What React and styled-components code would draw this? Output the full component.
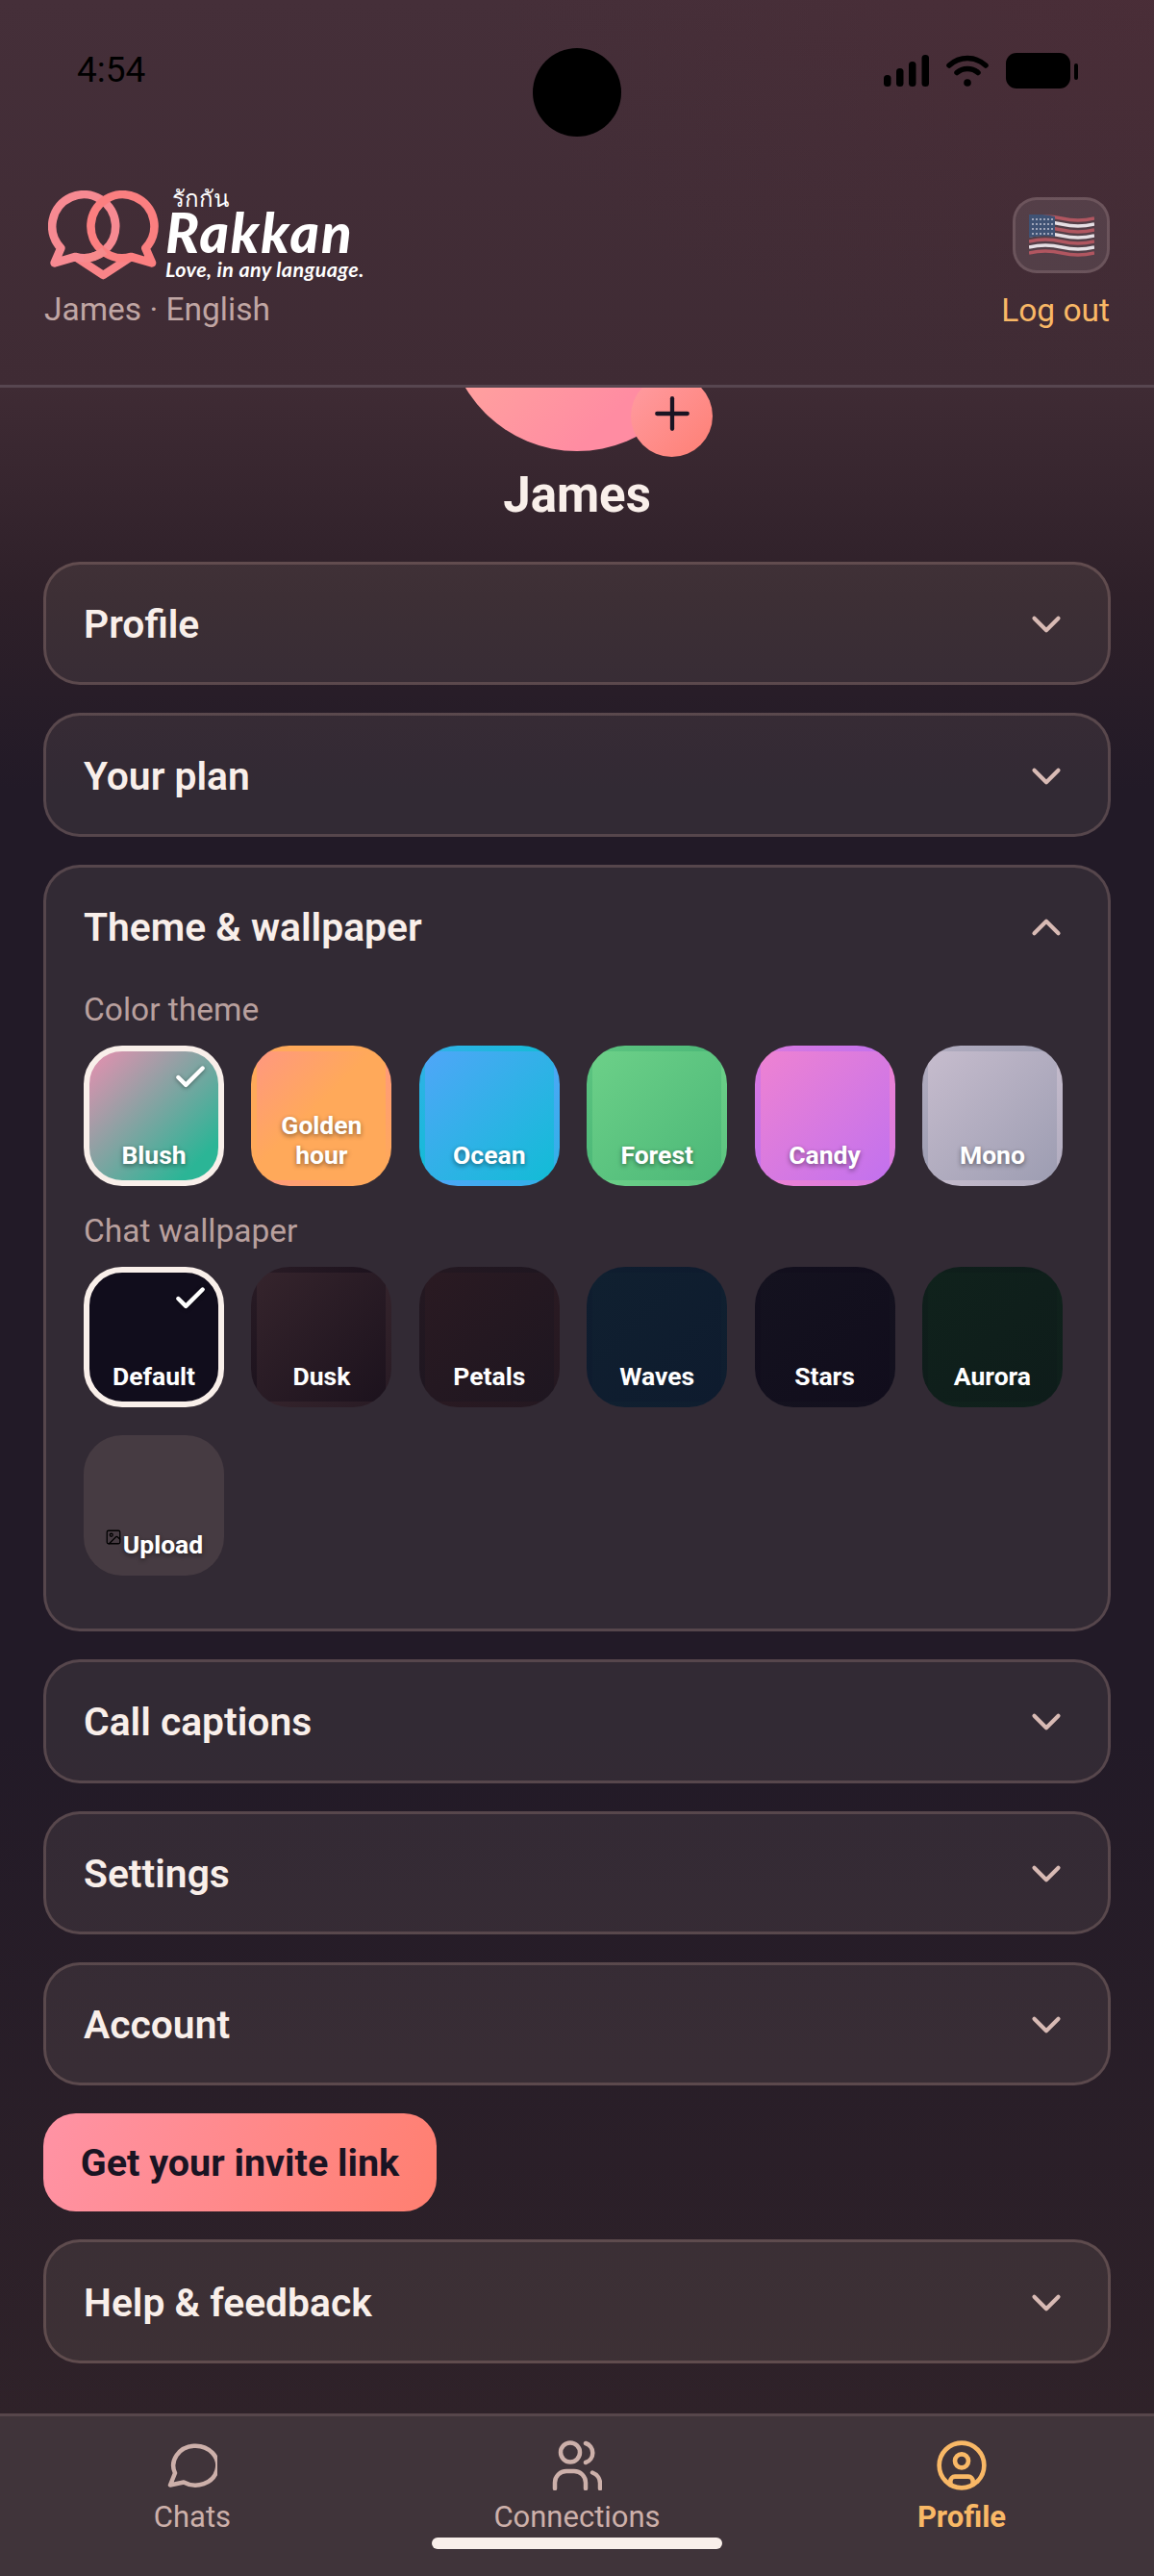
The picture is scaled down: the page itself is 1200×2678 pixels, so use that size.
import React from "react";
import styled, { createGlobalStyle } from "styled-components";
import { Check, ChevronDown, ChevronUp, CircleUser, Image, Plus } from "lucide-react";

const GlobalStyle = createGlobalStyle`
  html, body {
    margin: 0;
    padding: 0;
    background: #221a27;
  }
  * {
    box-sizing: border-box;
  }
`;

const Page = styled.div`
  position: relative;
  width: 1200px;
  height: 2678px;
  display: flex;
  flex-direction: column;
  overflow: hidden;
  font-family: Roboto, "Noto Sans", sans-serif;
  color: #f9efea;
  background:
    radial-gradient(700px 400px at 100% 0, rgba(90, 40, 50, 0.22), transparent 100%),
    linear-gradient(180deg, #452f39 0, #3f2b34 400px, #2e2029 620px, #221a27 820px, #221a27 1800px, #2f2229 2510px);
`;

const Header = styled.header`
  height: 403px;
  flex-shrink: 0;
  border-bottom: 3px solid #574650;
  padding: 0 46px 0 46px;
  display: flex;
  flex-direction: column;
`;

const StatusBar = styled.div`
  height: 195px;
  padding: 55px 33px 0 34px;
  display: flex;
  justify-content: space-between;
  align-items: flex-start;
`;

const Clock = styled.span`
  font-size: 37px;
  line-height: 36px;
  color: #000;
`;

const StatusIcons = styled.div`
  display: flex;
  align-items: center;
  gap: 18px;
`;

const Camera = styled.div`
  position: absolute;
  left: 554px;
  top: 50px;
  width: 92px;
  height: 92px;
  border-radius: 50%;
  background: #000;
`;

const BrandRow = styled.div`
  display: flex;
  justify-content: space-between;
  align-items: flex-start;
`;

const BrandColumn = styled.div`
  display: flex;
  flex-direction: column;
`;

const Logo = styled.div`
  display: flex;
  align-items: flex-start;
  margin: 3px 0 0 4px;
  gap: 7px;
`;

const Wordmark = styled.div`
  display: flex;
  flex-direction: column;
  margin-top: -4px;
  color: #fff;
`;

const ThaiName = styled.span`
  font-size: 24px;
  line-height: 24px;
  margin-left: 7px;
  font-family: "Noto Sans", "DejaVu Sans", sans-serif;
`;

const LogoName = styled.span`
  font-family: "Lato", sans-serif;
  font-style: italic;
  font-weight: 900;
  font-size: 58px;
  line-height: 46px;
  letter-spacing: 1.8px;
`;

const Tagline = styled.span`
  font-family: "Lato", sans-serif;
  font-style: italic;
  font-weight: 700;
  font-size: 21.5px;
  line-height: 26px;
  letter-spacing: 0.4px;
  margin-top: 3px;
`;

const UserLine = styled.div`
  font-size: 33.5px;
  line-height: 40px;
  margin-top: 9px;
  color: #c0a6a4;
`;

const AccountColumn = styled.div`
  display: flex;
  flex-direction: column;
  align-items: flex-end;
  margin-top: 10px;
`;

const FlagButton = styled.div`
  width: 101px;
  height: 79px;
  border-radius: 25px;
  border: 3px solid rgba(255, 220, 220, 0.14);
  background: rgba(255, 255, 255, 0.09);
  display: flex;
  align-items: center;
  justify-content: center;
`;

const LogOut = styled.span`
  font-size: 33.5px;
  line-height: 40px;
  margin-top: 19px;
  color: #f9b866;
`;

const Main = styled.main`
  flex: 1;
  min-height: 0;
  overflow: hidden;
  padding: 0 45px;
  display: flex;
  flex-direction: column;
  gap: 29px;
`;

const ProfileTop = styled.div`
  display: flex;
  flex-direction: column;
  align-items: center;
  height: 152px;
  flex-shrink: 0;
`;

const AvatarSlot = styled.div`
  height: 66px;
  display: flex;
  align-items: flex-end;
  justify-content: center;
`;

const Avatar = styled.div`
  position: relative;
  width: 270px;
  height: 270px;
  flex-shrink: 0;
  border-radius: 50%;
  background: linear-gradient(135deg, #ff9e9f 45%, #ff8ca2 75%);
`;

const AddPhoto = styled.div`
  position: absolute;
  right: -6px;
  bottom: -6px;
  width: 85px;
  height: 85px;
  padding-bottom: 6px;
  border-radius: 50%;
  background: linear-gradient(135deg, #ff9da3, #fe7f74);
  color: #1a1423;
  display: flex;
  align-items: center;
  justify-content: center;
`;

const DisplayName = styled.div`
  font-size: 51px;
  line-height: 56px;
  font-weight: 700;
  margin-top: 18px;
`;

const Card = styled.section`
  flex-shrink: 0;
  border: 3px solid rgba(255, 205, 190, 0.18);
  border-radius: 38px;
  background: rgba(255, 240, 215, 0.075);
  padding: ${(p) => (p.$open ? "0 0 55px" : "0")};
`;

const CardHead = styled.div`
  height: 122.4px;
  padding: 2px 39px 0 39px;
  display: flex;
  align-items: center;
  justify-content: space-between;
  font-size: 40.8px;
  font-weight: 600;
  color: #f9efea;

  svg {
    color: #d8bab4;
  }
`;

const CardBody = styled.div`
  padding: 4px 39px 0;
`;

const SectionLabel = styled.div`
  font-size: 33.5px;
  line-height: 44px;
  color: #b9a09e;
  margin-bottom: 15px;
`;

const TileGrid = styled.div`
  display: flex;
  flex-wrap: wrap;
  gap: 29px 28.4px;
  margin-bottom: ${(p) => (p.$last ? "0" : "25px")};
`;

const Tile = styled.div`
  position: relative;
  width: 146px;
  height: 146px;
  flex-shrink: 0;
  border-radius: 40px;
  border: 6px solid ${(p) => (p.$selected ? "#f9efea" : "transparent")};
  background: ${(p) => p.$bg};
  padding: 0 0 11px;
  display: flex;
  align-items: flex-end;
  justify-content: center;
`;

const TileLabel = styled.span`
  font-size: 26.5px;
  line-height: 31px;
  font-weight: 700;
  text-align: center;
  color: #fff;
  text-shadow: ${(p) => (p.$shadow ? "0 2px 5px rgba(0, 0, 0, 0.45)" : "none")};

  svg {
    color: #000;
    vertical-align: 8px;
    margin-right: 1px;
  }
`;

const TileCheck = styled.span`
  position: absolute;
  top: 8px;
  right: 10px;
  display: flex;
  color: #fff;
  filter: drop-shadow(0 1px 2px rgba(0, 0, 0, 0.4));
`;

const InviteButton = styled.button`
  align-self: flex-start;
  flex-shrink: 0;
  width: 409px;
  height: 102px;
  border: none;
  border-radius: 34px;
  background: linear-gradient(110deg, #ff93a5, #ff7f70);
  font-family: inherit;
  font-size: 39.5px;
  font-weight: 700;
  color: #1a1423;
`;

const BottomNav = styled.nav`
  position: relative;
  height: 169px;
  flex-shrink: 0;
  border-top: 3px solid #57464b;
  background: #40343a;
  display: grid;
  grid-template-columns: repeat(3, 1fr);
`;

const NavItem = styled.div`
  display: flex;
  flex-direction: column;
  align-items: center;
  padding-top: 23px;
  color: ${(p) => (p.$active ? "#f9b866" : "#cdb0aa")};
  font-weight: ${(p) => (p.$active ? 700 : 400)};
  font-size: 31px;
`;

const NavIcon = styled.div`
  height: 56px;
  display: flex;
  align-items: center;
  justify-content: center;
`;

const NavLabel = styled.span`
  line-height: 36px;
  margin-top: 8px;
`;

const HomeIndicator = styled.div`
  position: absolute;
  left: 449px;
  bottom: 28px;
  width: 302px;
  height: 12px;
  border-radius: 6px;
  background: #f9efea;
`;

const SignalIcon = () => (
  <svg width="47" height="33" viewBox="0 0 47 33" fill="#000">
    <rect x="0" y="21" width="7.5" height="12" rx="3.5" />
    <rect x="13" y="14" width="7.5" height="19" rx="3.5" />
    <rect x="26" y="7" width="7.5" height="26" rx="3.5" />
    <rect x="39.5" y="0" width="7.5" height="33" rx="3.5" />
  </svg>
);

const WifiIcon = () => (
  <svg width="44" height="33" viewBox="0 0 44 33" fill="none" stroke="#000" strokeWidth="5.5" strokeLinecap="round">
    <path d="M3 11 C14 1 30 1 41 11" />
    <path d="M11 18.5 C17 13 27 13 33 18.5" />
    <circle cx="22" cy="29" r="3.8" fill="#000" stroke="none" />
  </svg>
);

const BatteryIcon = () => (
  <svg width="75" height="37" viewBox="0 0 75 37" fill="#000">
    <rect x="0" y="0" width="67" height="37" rx="11" />
    <rect x="71" y="11" width="4" height="17" rx="2" />
  </svg>
);

const LogoMark = () => (
  <svg width="115" height="94" viewBox="0 0 345 282" fill="none" strokeWidth="26" strokeLinejoin="round" style={{ flexShrink: 0 }}>
    <path d="M85 207 L172 264 L259 207" stroke="#f98488" />
    <path d="M85 207 A99 99 0 1 0 40 180 L20 226 Z" stroke="#f78a92" />
    <path d="M259 207 A99 99 0 1 1 304 180 L324 226 Z" stroke="#fb7f80" />
    <path d="M176 188 A99 99 0 0 1 112 211" stroke="#f78a8c" />
  </svg>
);

const flagStripes = [3, 9, 15, 21, 27, 33, 39];

const WavyFlag = () => (
  <svg width="68" height="44" viewBox="0 0 68 44" fill="none">
    {flagStripes.map((y, i) => (
      <path
        key={y}
        d={`M0 ${y + 1} Q17 ${y - 3} 34 ${y + 1} T68 ${y + 1}`}
        stroke={i % 2 === 0 ? "#b05660" : "#e6dfe4"}
        strokeWidth="3.4"
      />
    ))}
    <path d="M0 0 Q14 -1 27 2 V23 Q14 21 0 24 Z" fill="#3f5274" />
    <path d="M3 5 H25 M3 10 H25 M3 15 H25 M3 20 H25" stroke="#a0a6ba" strokeWidth="1.8" strokeDasharray="2 2" />
  </svg>
);

const ChatBubbleIcon = () => (
  <svg width="52" height="48" viewBox="0 0 52 48" fill="none" stroke="currentColor" strokeWidth="4.5" strokeLinejoin="round">
    <path d="M8 32 L3 44.5 L17 41.5 A23 20.5 0 1 0 8 32 Z" />
  </svg>
);

const PeopleIcon = () => (
  <svg width="52" height="52" viewBox="0 0 52 52" fill="none" stroke="currentColor" strokeWidth="4.5" strokeLinecap="round">
    <circle cx="19" cy="12.5" r="10" />
    <path d="M35 3 a10.5 10.5 0 0 1 0 20" />
    <path d="M3 50 v-6 a12 12 0 0 1 12-12 h8 a12 12 0 0 1 12 12 v6" />
    <path d="M42 33.5 a12 12 0 0 1 8 12 v4.5" />
  </svg>
);

const themes = [
  { label: "Blush", bg: "linear-gradient(135deg, #e88fb0, #2bb596 85%)", selected: true },
  { label: "Golden hour", bg: "linear-gradient(135deg, #ff987f, #ffa95a 45%)" },
  { label: "Ocean", bg: "linear-gradient(135deg, #4fa6f8, #12bcd6)" },
  { label: "Forest", bg: "linear-gradient(135deg, #6cd088, #4cb878)" },
  { label: "Candy", bg: "linear-gradient(135deg, #ee82d2, #c271ee)" },
  { label: "Mono", bg: "linear-gradient(135deg, #c6bccd, #9d9db2)" },
];

const wallpapers = [
  { label: "Default", bg: "#110d1c", selected: true },
  { label: "Dusk", bg: "linear-gradient(135deg, #35242c, #1c121d)" },
  { label: "Petals", bg: "linear-gradient(135deg, #2a1a22, #1e1620)" },
  { label: "Waves", bg: "linear-gradient(135deg, #102030, #0e1b2e)" },
  { label: "Stars", bg: "linear-gradient(135deg, #14121f, #110d1c)" },
  { label: "Aurora", bg: "linear-gradient(135deg, #10221c, #0e1c1a)" },
];

const CollapsedCard = ({ title }) => (
  <Card>
    <CardHead>
      {title}
      <ChevronDown size={50} strokeWidth={2} />
    </CardHead>
  </Card>
);

const ChoiceTile = ({ label, bg, selected, shadow }) => (
  <Tile $bg={bg} $selected={selected}>
    {selected && (
      <TileCheck>
        <Check size={38} strokeWidth={2.8} />
      </TileCheck>
    )}
    <TileLabel $shadow={shadow}>{label}</TileLabel>
  </Tile>
);

const App = () => (
  <Page>
    <GlobalStyle />
    <Camera />
    <Header>
      <StatusBar>
        <Clock>4:54</Clock>
        <StatusIcons>
          <SignalIcon />
          <WifiIcon />
          <BatteryIcon />
        </StatusIcons>
      </StatusBar>
      <BrandRow>
        <BrandColumn>
          <Logo>
            <LogoMark />
            <Wordmark>
              <ThaiName>รักกัน</ThaiName>
              <LogoName>Rakkan</LogoName>
              <Tagline>Love, in any language.</Tagline>
            </Wordmark>
          </Logo>
          <UserLine>James · English</UserLine>
        </BrandColumn>
        <AccountColumn>
          <FlagButton>
            <WavyFlag />
          </FlagButton>
          <LogOut>Log out</LogOut>
        </AccountColumn>
      </BrandRow>
    </Header>
    <Main>
      <ProfileTop>
        <AvatarSlot>
          <Avatar>
            <AddPhoto>
              <Plus size={54} strokeWidth={1.9} />
            </AddPhoto>
          </Avatar>
        </AvatarSlot>
        <DisplayName>James</DisplayName>
      </ProfileTop>
      <CollapsedCard title="Profile" />
      <CollapsedCard title="Your plan" />
      <Card $open>
        <CardHead>
          Theme &amp; wallpaper
          <ChevronUp size={50} strokeWidth={2} />
        </CardHead>
        <CardBody>
          <SectionLabel>Color theme</SectionLabel>
          <TileGrid>
            {themes.map((t) => (
              <ChoiceTile key={t.label} {...t} shadow />
            ))}
          </TileGrid>
          <SectionLabel>Chat wallpaper</SectionLabel>
          <TileGrid $last>
            {wallpapers.map((w) => (
              <ChoiceTile key={w.label} {...w} />
            ))}
            <Tile $bg="#463b42">
              <TileLabel $shadow>
                <Image size={18} strokeWidth={1.7} />
                Upload
              </TileLabel>
            </Tile>
          </TileGrid>
        </CardBody>
      </Card>
      <CollapsedCard title="Call captions" />
      <CollapsedCard title="Settings" />
      <CollapsedCard title="Account" />
      <InviteButton>Get your invite link</InviteButton>
      <CollapsedCard title="Help &amp; feedback" />
    </Main>
    <BottomNav>
      <NavItem>
        <NavIcon>
          <ChatBubbleIcon />
        </NavIcon>
        <NavLabel>Chats</NavLabel>
      </NavItem>
      <NavItem>
        <NavIcon>
          <PeopleIcon />
        </NavIcon>
        <NavLabel>Connections</NavLabel>
      </NavItem>
      <NavItem $active>
        <NavIcon>
          <CircleUser size={56} strokeWidth={2} />
        </NavIcon>
        <NavLabel>Profile</NavLabel>
      </NavItem>
      <HomeIndicator />
    </BottomNav>
  </Page>
);

export default App;
